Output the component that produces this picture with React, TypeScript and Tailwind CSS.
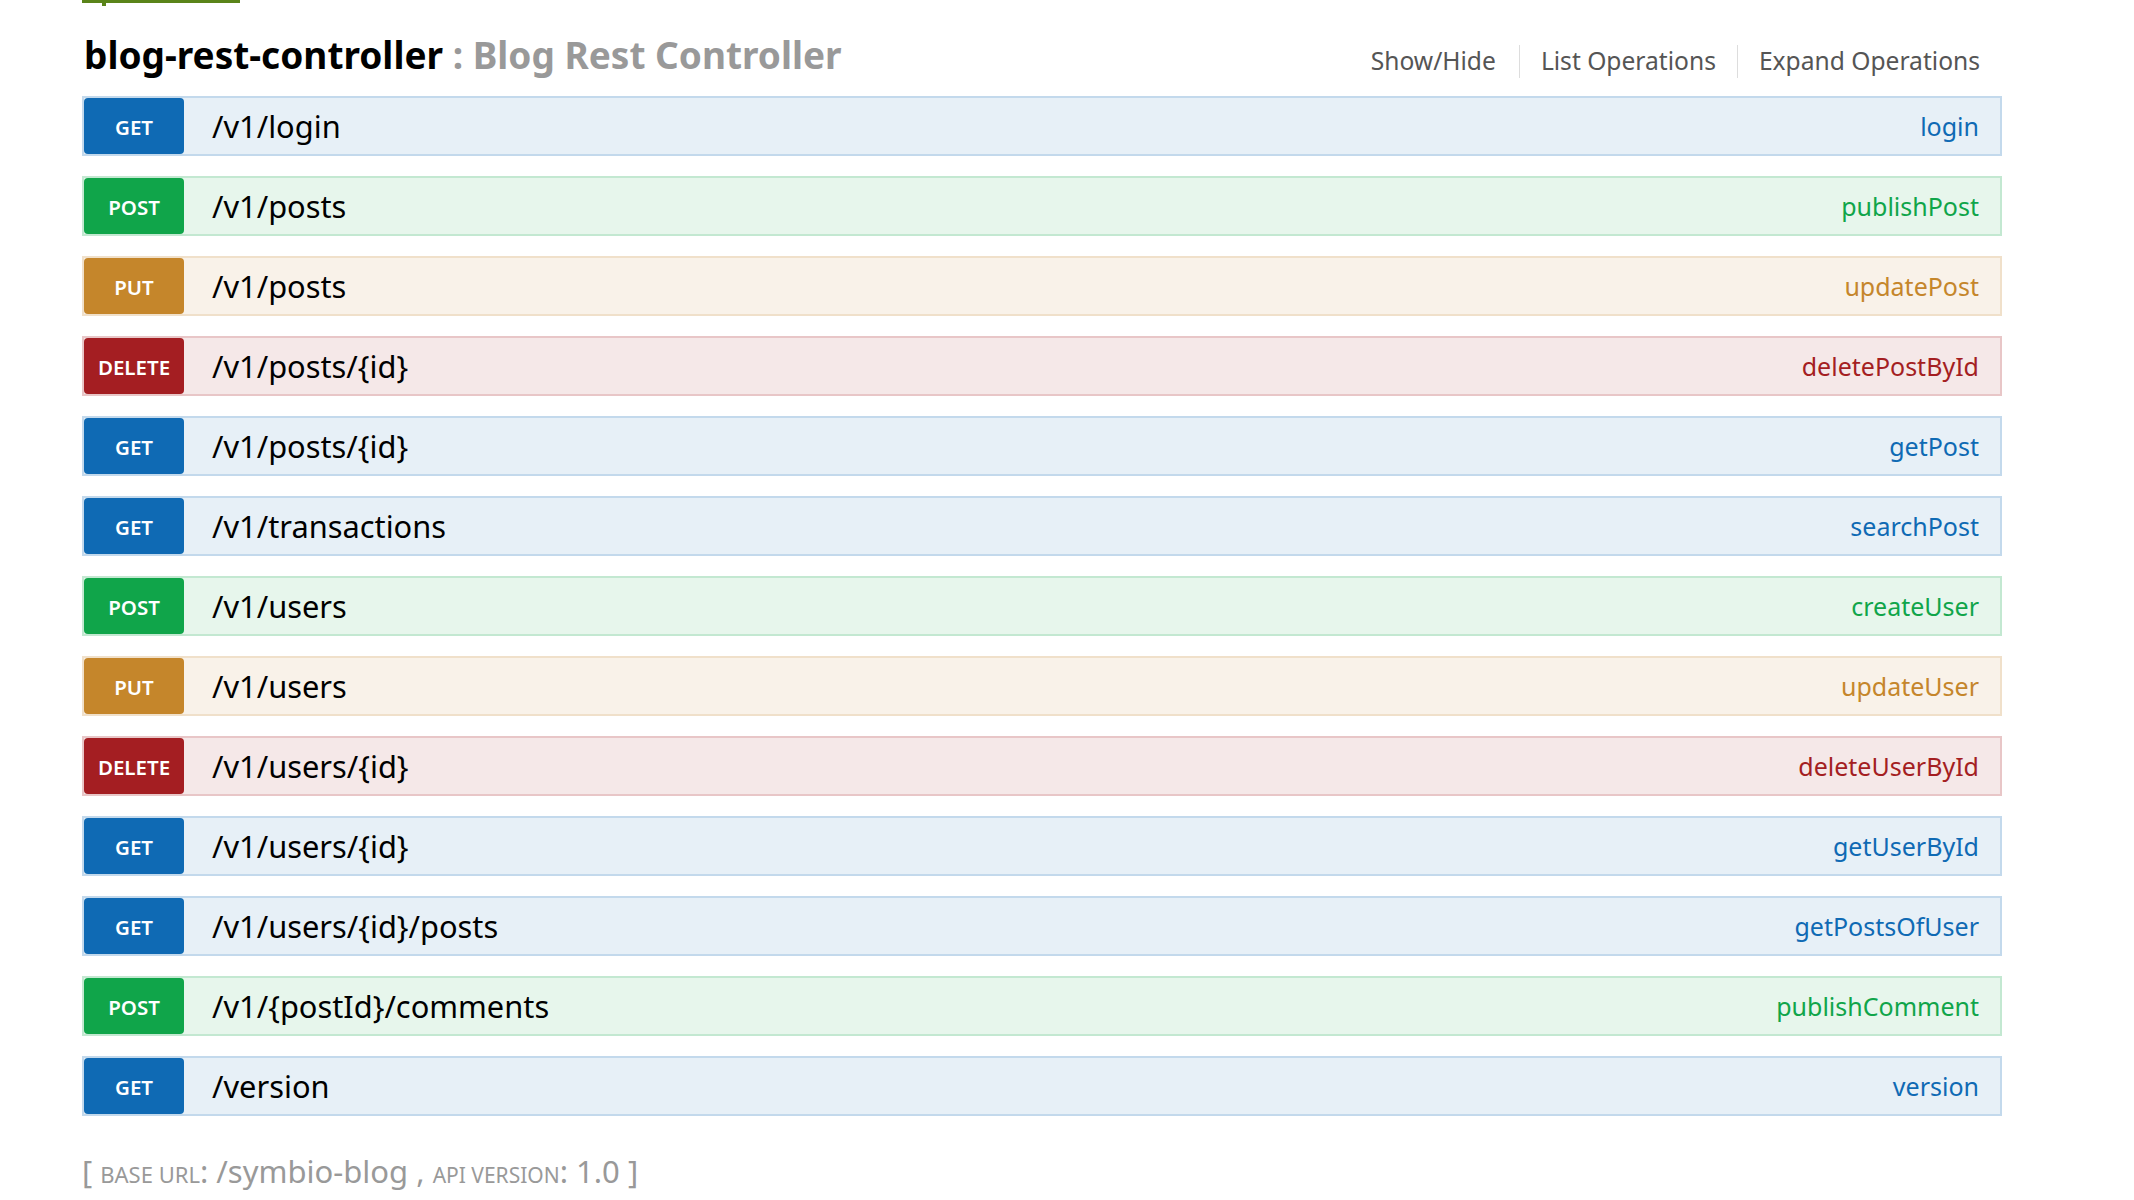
import React from "react";

type Method = "GET" | "POST" | "PUT" | "DELETE";

const styles: Record<Method, { badge: string; row: string; text: string }> = {
  GET: { badge: "bg-[#0f6ab4]", row: "bg-[#e7f0f7] border-[#c3d9ec]", text: "text-[#0f6ab4]" },
  POST: { badge: "bg-[#10a54a]", row: "bg-[#e7f6ec] border-[#c3e8d1]", text: "text-[#10a54a]" },
  PUT: { badge: "bg-[#c5862b]", row: "bg-[#f9f2e9] border-[#f0e0ca]", text: "text-[#c5862b]" },
  DELETE: { badge: "bg-[#a41e22]", row: "bg-[#f5e8e8] border-[#e8c6c7]", text: "text-[#a41e22]" },
};

const ops: { m: Method; path: string; nick: string }[] = [
  { m: "GET", path: "/v1/login", nick: "login" },
  { m: "POST", path: "/v1/posts", nick: "publishPost" },
  { m: "PUT", path: "/v1/posts", nick: "updatePost" },
  { m: "DELETE", path: "/v1/posts/{id}", nick: "deletePostById" },
  { m: "GET", path: "/v1/posts/{id}", nick: "getPost" },
  { m: "GET", path: "/v1/transactions", nick: "searchPost" },
  { m: "POST", path: "/v1/users", nick: "createUser" },
  { m: "PUT", path: "/v1/users", nick: "updateUser" },
  { m: "DELETE", path: "/v1/users/{id}", nick: "deleteUserById" },
  { m: "GET", path: "/v1/users/{id}", nick: "getUserById" },
  { m: "GET", path: "/v1/users/{id}/posts", nick: "getPostsOfUser" },
  { m: "POST", path: "/v1/{postId}/comments", nick: "publishComment" },
  { m: "GET", path: "/version", nick: "version" },
];

export default function App() {
  return (
    <div className="min-h-screen bg-white font-['Noto_Sans','Open_Sans',sans-serif]">
      <div className="ml-[82px] w-[1920px]">
        <div className="relative h-[96px]">
          <div className="absolute left-0 top-0 h-[3px] w-[158px] bg-[#5a8419]" />
          <div className="absolute left-[20px] top-0 h-[6px] w-[4px] bg-[#5a8419]" />
          <div className="flex items-start justify-between">
            <h2 className="mt-[36px] pl-[2px] text-[37px] font-bold leading-none text-black">
              blog-rest-controller <span className="text-[#999]">: Blog Rest Controller</span>
            </h2>
            <ul className="mt-[45px] flex pr-[22px] text-[24.6px] leading-none text-[#555]">
              <li className="flex h-[33px] items-center pr-[23px]">Show/Hide</li>
              <li className="flex h-[33px] items-center border-l border-[#ddd] px-[21px]">List Operations</li>
              <li className="flex h-[33px] items-center border-l border-[#ddd] pl-[21px]">Expand Operations</li>
            </ul>
          </div>
        </div>
        <div className="flex flex-col gap-[20px]">
          {ops.map((o, i) => {
            const s = styles[o.m];
            return (
              <div key={i} className={`flex h-[60px] items-center border-2 ${s.row}`}>
                <div
                  className={`flex h-full w-[100px] items-center justify-center rounded-[4px] pt-[3px] text-[20.5px] font-semibold leading-none text-white ${s.badge}`}
                >
                  {o.m}
                </div>
                <div className="ml-[28px] text-[30.8px] leading-none text-black">{o.path}</div>
                <div className={`ml-auto pr-[21px] text-[25px] leading-none ${s.text}`}>{o.nick}</div>
              </div>
            );
          })}
        </div>
        <div className="mt-[40px] text-[31px] leading-none text-[#999]">
          [ <span className="text-[22px] uppercase">base url</span>: /symbio-blog ,{" "}
          <span className="text-[21px] uppercase">api version</span>: 1.0 ]
        </div>
      </div>
    </div>
  );
}
